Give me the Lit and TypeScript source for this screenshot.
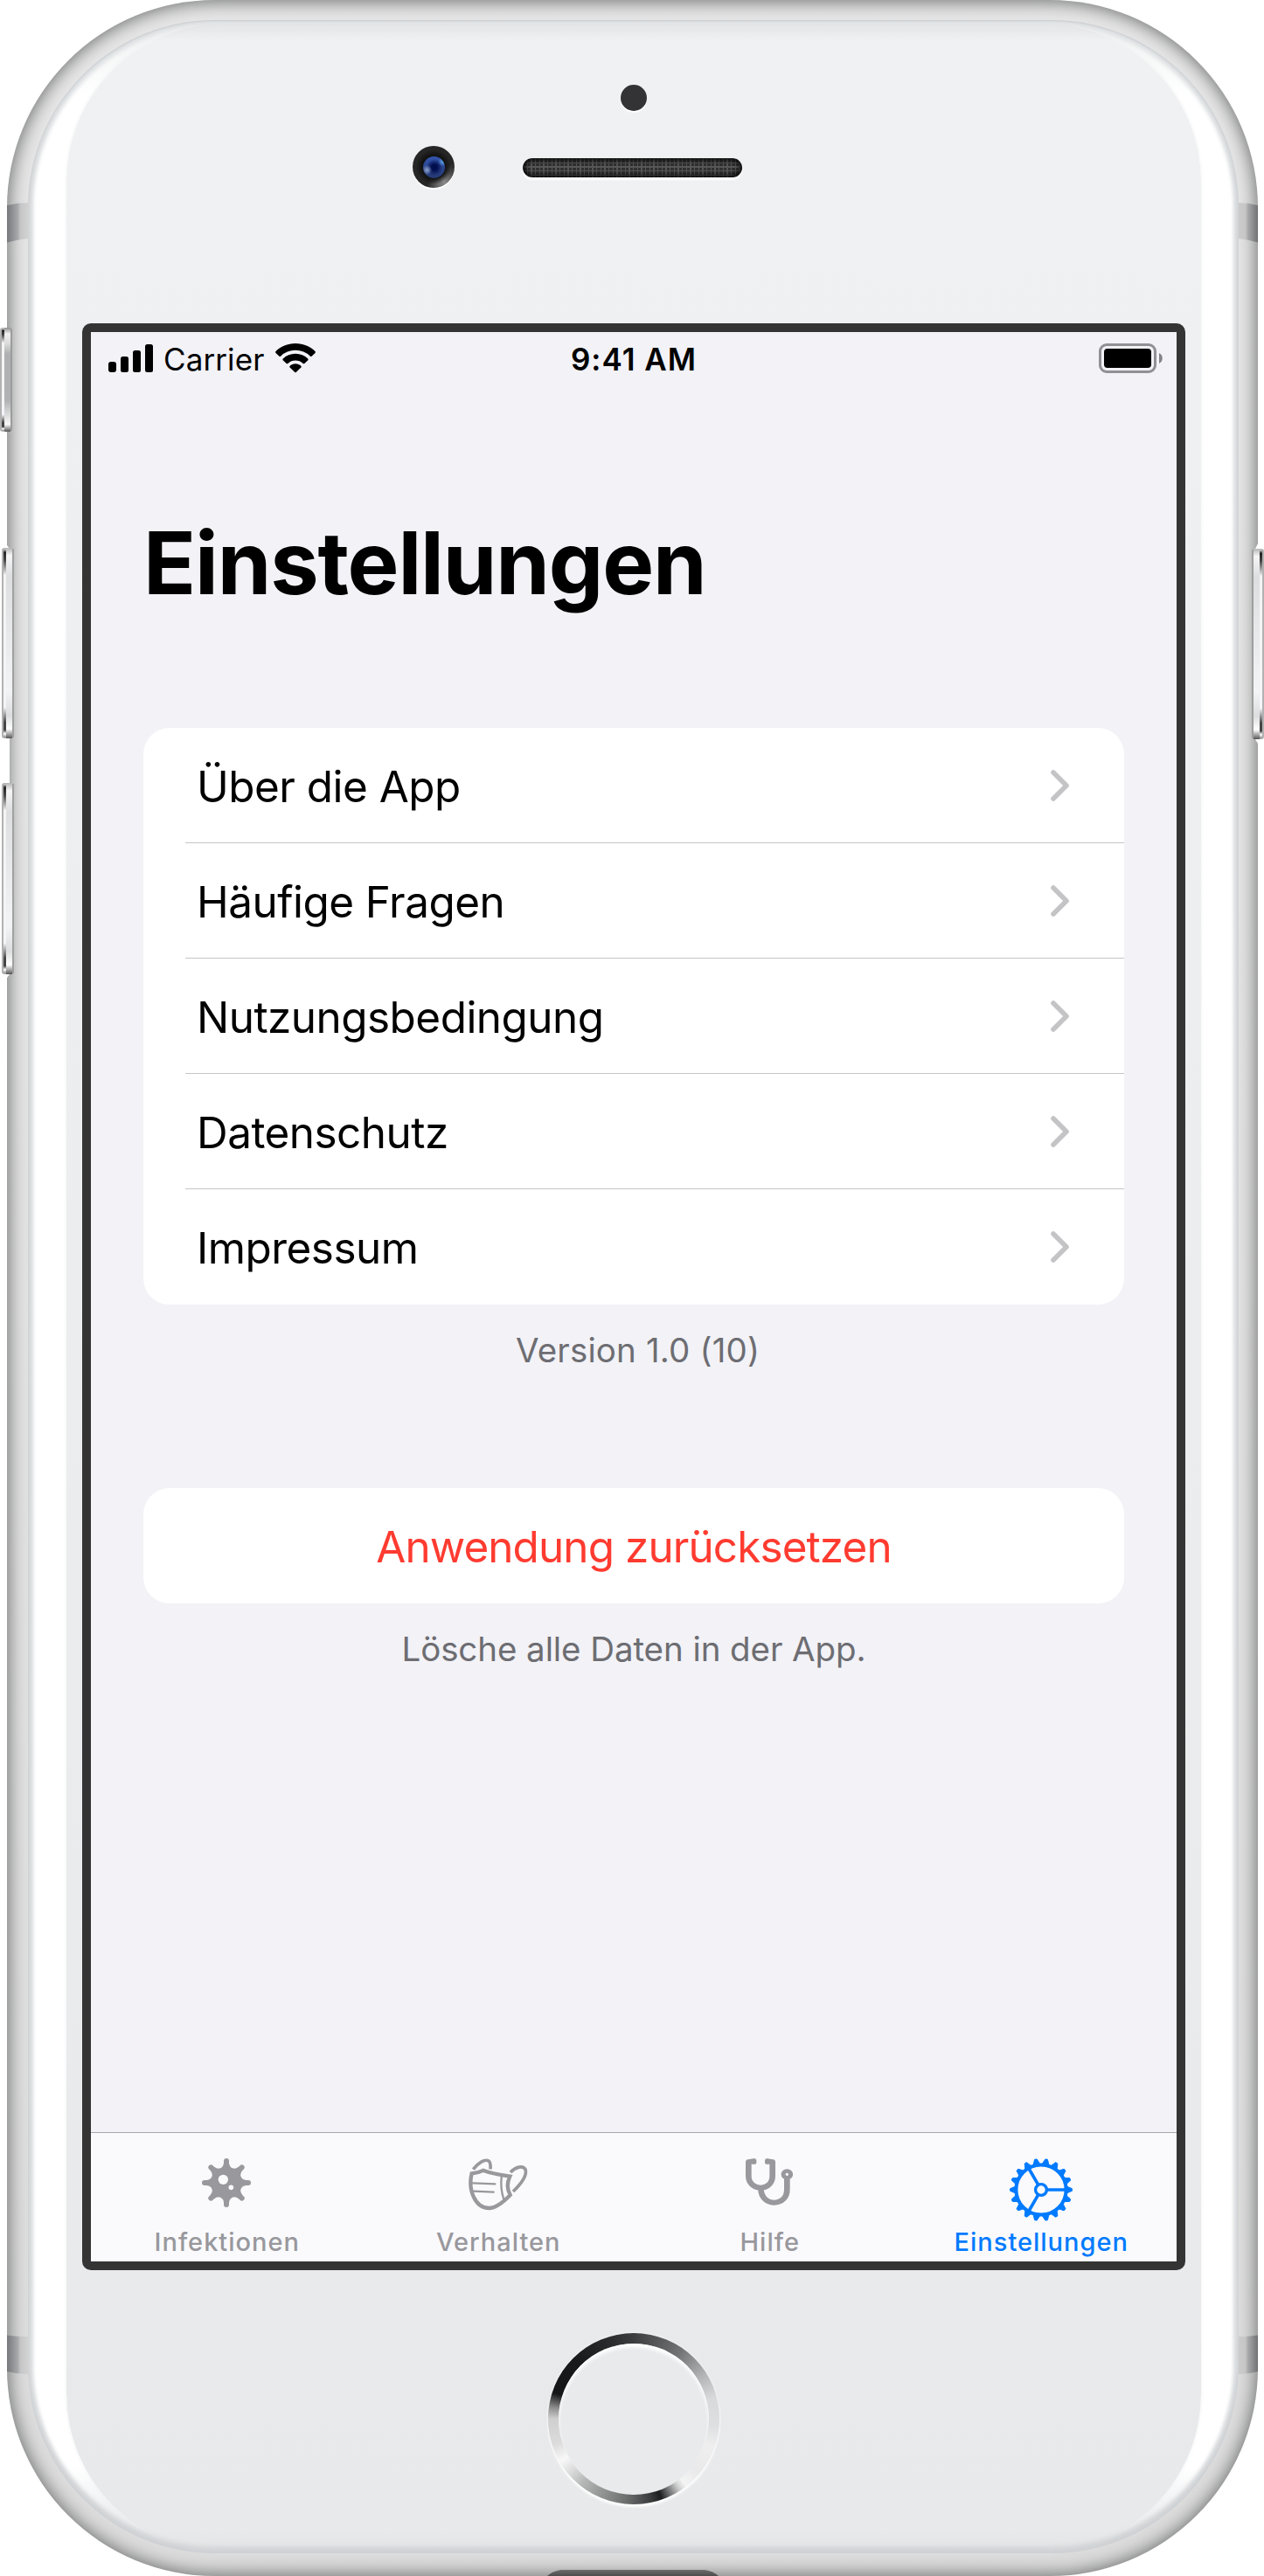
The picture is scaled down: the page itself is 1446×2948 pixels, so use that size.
import { LitElement, html, css } from "lit";
import type { TemplateResult } from "lit";
import { customElement, property } from "lit/decorators.js";
import { classMap } from "lit/directives/class-map.js";

const point = (angle: number, u: number, v: number) => {
  const c = Math.cos(angle);
  const s = Math.sin(angle);
  return `${(u * c - v * s).toFixed(2)} ${(u * s + v * c).toFixed(2)}`;
};

/* Eight spikes joined to the body by concave fillets. */
const virusBody = Array.from({ length: 8 }, (_, i) => {
  const a = (i * Math.PI) / 4;
  const b = a + Math.PI / 4;
  return `${i ? "L" : "M"}${point(a, 68, 9)}Q${point(a, 54, 10.5)} ${point(a, 49.9, 20.7)}Q${point(b, 54, -10.5)} ${point(b, 68, -9)}`;
}).join("") + "Z";

const virusSpikes = Array.from({ length: 8 }, (_, i) => `M0 0L${point((i * Math.PI) / 4, 75, 0)}`).join("");

const gearTeeth = Array.from({ length: 18 }, (_, i) => {
  const a = (i * Math.PI) / 9;
  return `M${point(a, 30, -3.6)}L${point(a, 35.4, -1.3)}L${point(a, 35.4, 1.3)}L${point(a, 30, 3.6)}Z`;
}).join("");

const gearSpokes = [0, 1, 2]
  .map((i) => `M${point((i * 2 * Math.PI) / 3, 7, 0)}L${point((i * 2 * Math.PI) / 3, 28, 0)}`)
  .join("");

const virusIcon = html`<svg width="56" height="56" viewBox="-84 -84 168 168">
  <path d=${virusBody} fill="currentColor" />
  <path d=${virusSpikes} stroke="currentColor" stroke-width="18" stroke-linecap="round" />
  <circle cx="-11" cy="-11" r="17" fill="#fafafc" />
  <circle cx="16" cy="16" r="8.5" fill="#fafafc" />
</svg>`;

const maskIcon = html`<svg width="68" height="60" viewBox="1158 149 204 180" fill="none" stroke="currentColor">
  <path stroke-width="13" d="M1169 201Q1190 200 1208 190.500Q1240 203 1300 211Q1284 245 1301 275C1275 302 1252 320 1228 320C1182 320 1155 260 1169 201Z" />
  <path stroke-width="7" stroke-linecap="round" d="M1172 234L1249 237M1175 262L1244 265" />
  <path stroke-width="7" d="M1271.500 212Q1266 250 1279 290" />
  <path stroke-width="11" d="M1302 197C1320 178 1345 172 1353 187C1360 208 1335 240 1311 263" />
  <path stroke-width="11" d="M1174 187C1190 165 1214 150 1227 158C1234 163 1234 172 1233 186" />
</svg>`;

const stethoscopeIcon = html`<svg width="54" height="54" viewBox="142 151 146 162" preserveAspectRatio="none" fill="none" stroke="currentColor">
  <path stroke-width="18" stroke-linejoin="round" d="M169 161L151 164V212C151 240 172 252 188.500 252C205 252 225 240 225 212V164L207 161" />
  <path stroke-width="13" stroke-linecap="round" d="M169 158.500V165M208 158.500V165" />
  <path stroke-width="18" d="M189 255C190 288 210 303 229 303C254 303 270 285 270 258V222" />
  <circle cx="270" cy="206" r="11.500" stroke-width="13.500" />
</svg>`;

const gearIcon = html`<svg width="72" height="72" viewBox="-36 -36 72 72" fill="none" stroke="currentColor">
  <path d=${gearTeeth} fill="currentColor" stroke-width="1" stroke-linejoin="round" />
  <circle r="28.600" stroke-width="4" />
  <circle r="6.400" stroke-width="3.400" />
  <path d=${gearSpokes} stroke-width="3.600" />
</svg>`;

@customElement("status-bar")
export class StatusBar extends LitElement {
  static styles = css`
    :host {
      display: grid;
      grid-template-columns: 1fr auto 1fr;
      align-items: center;
      height: 61px;
      padding: 0 16px 2px 20px;
      font-size: 35px;
      color: #000;
    }
    .left {
      display: flex;
      align-items: center;
    }
    .bars {
      display: block;
      margin: 0 12px 1px 0;
    }
    .carrier {
      letter-spacing: 0.1px;
    }
    .wifi {
      display: block;
      margin: 0 0 2px 13px;
    }
    .clock {
      margin-right: 4px;
      font-weight: 600;
      letter-spacing: 1px;
    }
    .battery {
      display: block;
      justify-self: end;
      margin-bottom: 1px;
    }
  `;

  render() {
    return html`
      <div class="left">
        <svg class="bars" width="51" height="32" viewBox="0 0 51 32">
          <rect x="0" y="20" width="9" height="12" rx="3" />
          <rect x="14" y="14" width="9" height="18" rx="2.5" />
          <rect x="28" y="7" width="9" height="25" rx="2.5" />
          <rect x="42" y="0" width="9" height="32" rx="2.5" />
        </svg>
        <span class="carrier">Carrier</span>
        <svg class="wifi" width="46" height="34" viewBox="0 0 46 34">
          <path d="M23 0C32 0 40 3.500 45.500 9Q46.200 10 45.500 11L41.500 14.800Q40.700 15.300 40 14.700A24.500 24.500 0 0 0 6 14.700Q5.300 15.300 4.500 14.800L.5 11Q-.2 10 .5 9C6 3.500 14 0 23 0Z" />
          <path d="M23 11.700C28.500 11.700 33.500 13.800 37.300 17.500Q38 18.400 37.300 19.300L33.300 23Q32.500 23.600 31.700 23A12.800 12.800 0 0 0 14.300 23Q13.500 23.600 12.700 23L8.700 19.300Q8 18.400 8.700 17.500C12.500 13.800 17.500 11.700 23 11.700Z" />
          <path d="M23 23.300C25.600 23.300 27.800 24.200 29.400 25.800Q30 26.600 29.400 27.400L23.700 33Q23 33.500 22.300 33L16.600 27.400Q16 26.600 16.600 25.800C18.200 24.200 20.400 23.300 23 23.300Z" />
        </svg>
      </div>
      <span class="clock">9:41 AM</span>
      <svg class="battery" width="73" height="34" viewBox="0 0 73 34">
        <rect x="1.500" y="1.500" width="63" height="31" rx="7.500" fill="none" stroke="#919194" stroke-width="3" />
        <rect x="6" y="6" width="54" height="22" rx="4" />
        <path d="M69 11C74 13.500 74 20.500 69 23Z" fill="#838386" />
      </svg>
    `;
  }
}

@customElement("settings-page")
export class SettingsPage extends LitElement {
  static styles = css`
    :host {
      display: flex;
      flex-direction: column;
      flex: 1;
      padding: 141px 60px 0;
    }
    h1 {
      margin: 0 0 129px;
      font-size: 99px;
      line-height: 120px;
      font-weight: 700;
      letter-spacing: -1.15px;
      color: #000;
    }
    .card {
      border-radius: 30px;
      background: #fff;
      overflow: hidden;
    }
    .row {
      display: flex;
      align-items: center;
      justify-content: space-between;
      box-sizing: border-box;
      height: 132px;
      margin-left: 48px;
      padding: 1px 63px 0 13px;
      border-bottom: 1px solid #c6c6c8;
      font-size: 49.4px;
      letter-spacing: -0.5px;
      color: #000;
    }
    .row:last-child {
      border-bottom-color: transparent;
    }
    .row span {
      padding-top: 2px;
    }
    .note {
      margin: 26px 0 0;
      font-size: 38.5px;
      line-height: 52px;
      text-align: center;
      color: #6d6d72;
    }
    .version {
      margin-bottom: 132px;
      padding-left: 9px;
      letter-spacing: 0.15px;
    }
    .reset-note {
      letter-spacing: -0.08px;
    }
    .reset {
      height: 132px;
      line-height: 134px;
      font-size: 49.4px;
      letter-spacing: -0.87px;
      text-align: center;
      color: #ff3b30;
    }
  `;

  private items = ["Über die App", "Häufige Fragen", "Nutzungsbedingung", "Datenschutz", "Impressum"];

  render() {
    return html`
      <h1>Einstellungen</h1>
      <div class="card">
        ${this.items.map(
          (label) => html`<div class="row">
            <span>${label}</span>
            <svg width="21" height="36" viewBox="0 0 21 36" fill="none" stroke="#c4c4c6" stroke-width="5.600" stroke-linecap="round" stroke-linejoin="round">
              <path d="M3 3L18 18L3 33" />
            </svg>
          </div>`,
        )}
      </div>
      <p class="note version">Version 1.0 (10)</p>
      <div class="card reset">Anwendung zurücksetzen</div>
      <p class="note reset-note">Lösche alle Daten in der App.</p>
    `;
  }
}

interface Tab {
  label: string;
  icon: TemplateResult;
  active?: boolean;
}

@customElement("tab-bar")
export class TabBar extends LitElement {
  static styles = css`
    :host {
      display: grid;
      grid-template-columns: repeat(4, 1fr);
      height: 147px;
      border-top: 1px solid #a8a8ad;
      background: #fafafc;
    }
    .tab {
      display: flex;
      flex-direction: column;
      align-items: center;
      color: #98989d;
    }
    .active {
      color: #007aff;
    }
    .icon {
      height: 78px;
      padding-top: 29px;
    }
    .icon svg {
      display: block;
    }
    .label {
      padding-left: 1px;
      font-size: 29px;
      line-height: 36px;
      font-weight: 500;
      letter-spacing: 1px;
    }
  `;

  @property({ attribute: false }) tabs: Tab[] = [];

  render() {
    return this.tabs.map(
      (tab) => html`<div class=${classMap({ tab: true, active: !!tab.active })}>
        <div class="icon">${tab.icon}</div>
        <span class="label">${tab.label}</span>
      </div>`,
    );
  }
}

@customElement("app-root")
export class AppRoot extends LitElement {
  static styles = css`
    :host {
      display: block;
      width: 1446px;
      height: 2948px;
      background: #fff;
      font-family: Inter, "Liberation Sans", sans-serif;
    }
    .device {
      position: relative;
      height: 2948px;
      padding: 0 7px 0 8px;
      overflow: hidden;
    }
    .case {
      box-sizing: border-box;
      height: 2948px;
      padding: 23px 22px 26px 24px;
      border-radius: 238px;
      background: linear-gradient(#e6e6e6, #e3e3e3 50%, #dcdcdc);
      box-shadow: inset 0 0 20px 2px #6c6e6d;
    }
    .glass {
      position: relative;
      box-sizing: border-box;
      height: 2899px;
      padding: 4px 43px 2px 44px;
      border-radius: 214px;
      background: linear-gradient(#f0f1f2, #f4f5f5 30px, #fff 85px, #fff 2800px, #ebedef 2860px, #e4e6e8);
    }
    .glass::after {
      content: "";
      position: absolute;
      inset: 0;
      border-radius: inherit;
      pointer-events: none;
      box-shadow: inset 0 1px 2px #c9cccf, inset 0 -3px 6px #cdd0d3, inset 0 -5px 6px 2px #d4d6d8,
        inset 0 0 4px 6px #e0e3e5;
    }
    .plate {
      display: flex;
      flex-direction: column;
      box-sizing: border-box;
      height: 2893px;
      padding: 0 18px;
      border-radius: 181px;
      background: linear-gradient(#e6e7e9, #e8e9eb 8px, #f0f1f3 20px, #e8e9eb 2870px, #e2e4e6);
      box-shadow: 0 0 4px 0 #f0f1f3;
    }
    .top {
      position: relative;
      height: 343px;
    }
    .sensor {
      position: absolute;
      left: 616px;
      top: 70px;
      width: 30px;
      height: 30px;
      border-radius: 50%;
      background: #333335;
      box-shadow: 0 2px 1px #fff;
    }
    .camera {
      position: absolute;
      left: 378px;
      top: 140px;
      width: 48px;
      height: 48px;
      border-radius: 50%;
      background: radial-gradient(closest-side, #121212 56%, transparent 84%),
        conic-gradient(#262626 80deg, #4a4a4a 110deg, #8a8a8a 145deg, #6c6c6c 165deg, #262626 200deg);
      box-shadow: 0 2px 1px #fff;
    }
    .lens {
      position: absolute;
      left: 12px;
      top: 12px;
      width: 25px;
      height: 25px;
      border-radius: 50%;
      background: radial-gradient(circle at 18% 62%, #8fa5cf, transparent 22%),
        radial-gradient(circle at 90% 24%, #5ba0e6, transparent 18%),
        radial-gradient(circle at 52% 50%, #020f4e 18%, transparent 52%),
        linear-gradient(#3355ae, #24376f);
    }
    .speaker {
      position: absolute;
      left: 504px;
      top: 154px;
      width: 251px;
      height: 22px;
      border-radius: 11px;
      background: repeating-linear-gradient(90deg, #565656 0 1.300px, transparent 1.300px 4.667px),
        repeating-linear-gradient(#565656 0 1.300px, #303030 1.300px 4.667px);
      box-shadow: inset 0 0 6px 2px #000, 0 3px 2px #fff;
    }
    .screen {
      display: flex;
      flex-direction: column;
      box-sizing: border-box;
      height: 2228px;
      border: 10px solid #343434;
      border-radius: 10px;
      background: #f2f2f7;
    }
    .bottom {
      display: flex;
      justify-content: center;
      padding-top: 72px;
    }
    .home {
      display: grid;
      place-items: center;
      width: 196px;
      height: 196px;
      border-radius: 50%;
      background: conic-gradient(#3c3d3e, #727475 35deg, #b2b4b6 58deg, #d8d9da 75deg, #dedfe0 95deg, #efefef 110deg,
        #e9e9e9 130deg, #f4f4f4 142deg, #d0d0d0 147deg, #6a6b6c 155deg, #1c1d1f 161deg, #3a3b3c 168deg,
        #6c6e6e 185deg, #8c8e8d 200deg, #b4b6b5 218deg, #dcdcdc 230deg, #f8f8f8 240deg, #dcdcdc 252deg, #cfcfcf 270deg,
        #8c8c8c 278deg, #151618 288deg, #18191b 315deg, #2a2b2d 342deg, #3c3d3e);
      box-shadow: 0 3px 3px #fff, 0 0 3px #f6f6f6;
    }
    .home-pad {
      width: 172px;
      height: 173px;
      border-radius: 50%;
      background: #e8eaeb;
      box-shadow: inset 0 4px 4px #fff;
    }
    .trim {
      position: absolute;
      left: 0;
      top: 0;
      display: block;
      pointer-events: none;
    }
  `;

  private tabs: Tab[] = [
    { label: "Infektionen", icon: virusIcon },
    { label: "Verhalten", icon: maskIcon },
    { label: "Hilfe", icon: stethoscopeIcon },
    { label: "Einstellungen", icon: gearIcon, active: true },
  ];

  /* A side key: outer edge, polished bevel, face. */
  private key(x: number, y: number, height: number, face = "face", mirrored = false) {
    const flip = mirrored ? `translate(${x + 12} ${y}) scale(-1 1)` : `translate(${x} ${y})`;
    return html`<svg class="trim" width="1446" height="2948">
      <defs>
        <linearGradient id="face" x2="0" y2="1">
          <stop offset="0" stop-color="#b5b5b5" />
          <stop offset=".04" stop-color="#f6f6f7" />
          <stop offset=".15" stop-color="#dddee0" />
          <stop offset=".75" stop-color="#f3f4f6" />
          <stop offset=".88" stop-color="#dcddde" />
          <stop offset=".95" stop-color="#ffffff" />
          <stop offset="1" stop-color="#555555" />
        </linearGradient>
        <linearGradient id="dark" x2="0" y2="1">
          <stop offset="0" stop-color="#909090" />
          <stop offset=".06" stop-color="#f0f0f0" />
          <stop offset=".15" stop-color="#dcdcdc" />
          <stop offset=".25" stop-color="#aeb0b2" />
          <stop offset=".7" stop-color="#b0b2b4" />
          <stop offset=".93" stop-color="#f8f8f8" />
          <stop offset="1" stop-color="#555555" />
        </linearGradient>
        <linearGradient id="bevel" x2="0" y2="1">
          <stop offset="0" stop-color="#dddddd" />
          <stop offset=".02" stop-color="#222222" />
          <stop offset=".06" stop-color="#444444" />
          <stop offset=".14" stop-color="#f4f4f4" />
          <stop offset=".84" stop-color="#f4f5f8" />
          <stop offset=".92" stop-color="#444444" />
          <stop offset=".96" stop-color="#444444" />
          <stop offset=".98" stop-color="#ffffff" />
          <stop offset="1" stop-color="#888888" />
        </linearGradient>
      </defs>
      <g transform=${flip}>
        <path d=${`M12 1H14V${height - 1}H12Z`} fill="#8a8a8a" opacity=".6" />
        <rect width="12" height=${height} rx="3" fill="#b2b2b2" />
        <rect x="2" y="1" width="4" height=${height - 2} rx="1.5" fill="url(#bevel)" />
        <rect x="5" width="7" height=${height} fill="url(#${face})" />
      </g>
    </svg>`;
  }

  render() {
    return html`
      <div class="device">
        <div class="case">
          <div class="glass">
            <div class="plate">
              <div class="top">
                <div class="sensor"></div>
                <div class="camera"><div class="lens"></div></div>
                <div class="speaker"></div>
              </div>
              <div class="screen">
                <status-bar></status-bar>
                <settings-page></settings-page>
                <tab-bar .tabs=${this.tabs}></tab-bar>
              </div>
              <div class="bottom">
                <div class="home"><div class="home-pad"></div></div>
              </div>
            </div>
          </div>
        </div>
        <svg class="trim" width="1446" height="2948">
          <defs>
            <linearGradient id="band">
              <stop offset="0" stop-color="#77787b" />
              <stop offset=".5" stop-color="#a6a7a9" />
              <stop offset=".65" stop-color="#c6c6c7" />
              <stop offset="1" stop-color="#d2d2d2" />
            </linearGradient>
            <linearGradient id="band-r" x1="1" x2="0">
              <stop offset="0" stop-color="#6f7173" />
              <stop offset=".5" stop-color="#a6a7a9" />
              <stop offset=".65" stop-color="#c6c6c7" />
              <stop offset="1" stop-color="#cccccc" />
            </linearGradient>
            <linearGradient id="port" x2="0" y2="1">
              <stop offset="0" stop-color="#6c6d6c" />
              <stop offset="1" stop-color="#4c4c4c" />
            </linearGradient>
          </defs>
          <path fill="url(#band)" d="M8 235Q20 232 32 232V273Q20 274 8 277.500Z" />
          <path fill="url(#band-r)" d="M1439 235Q1428 232 1417 232V273Q1428 274 1439 277.500Z" />
          <path fill="url(#band)" d="M8 2672.500Q20 2674 32 2674V2717Q20 2717 8 2714Z" />
          <path fill="url(#band-r)" d="M1439 2672.500Q1428 2674 1417 2674V2717Q1428 2717 1439 2714Z" />
          <path fill="#ffffff" d="M8 624L11 628V1115L8 1119ZM1439 622L1436 628V846L1439 851Z" />
          <path fill="url(#port)" d="M626 2948C632 2943 638 2941 644 2941H804C810 2941 816 2943 822 2948Z" />
        </svg>
        ${this.key(0, 375, 119, "dark")} ${this.key(2, 627, 218)} ${this.key(2, 896, 219)}
        ${this.key(1434, 628, 218, "face", true)}
      </div>
    `;
  }
}
